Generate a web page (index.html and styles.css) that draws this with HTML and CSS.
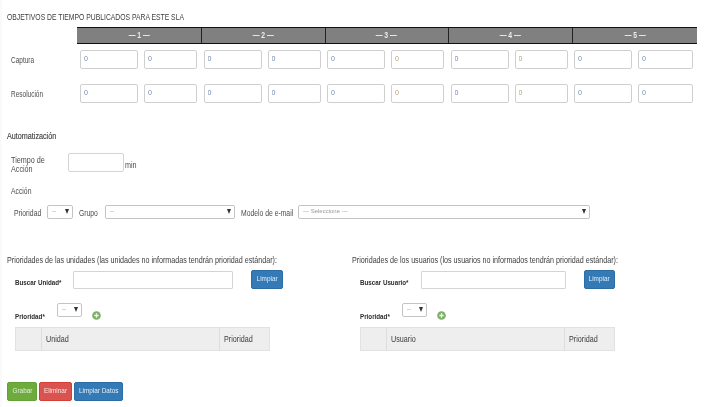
FILE: index.html
```html
<!DOCTYPE html>
<html lang="es">
<head>
<meta charset="utf-8">
<title>SLA</title>
<link rel="stylesheet" href="styles.css">
</head>
<body>
<main class="page">
  <h2 class="title"><span class="sq">OBJETIVOS DE TIEMPO PUBLICADOS PARA ESTE SLA</span></h2>
  <section class="targets">
    <div class="corner"></div>
    <div class="head">
      <div class="head-cell"><span class="sq mid">— 1 —</span></div>
      <div class="head-cell"><span class="sq mid">— 2 —</span></div>
      <div class="head-cell"><span class="sq mid">— 3 —</span></div>
      <div class="head-cell"><span class="sq mid">— 4 —</span></div>
      <div class="head-cell"><span class="sq mid">— 5 —</span></div>
    </div>
    <div class="row-label row-first"><span class="sq">Captura</span></div>
    <div class="cells row-first">
      <div class="pair"><input class="field" value="0"><input class="field" value="0"></div>
      <div class="pair"><input class="field" value="0"><input class="field" value="0"></div>
      <div class="pair"><input class="field" value="0"><input class="field warm" value="0"></div>
      <div class="pair"><input class="field" value="0"><input class="field warm" value="0"></div>
      <div class="pair"><input class="field" value="0"><input class="field" value="0"></div>
    </div>
    <div class="row-label row-second"><span class="sq">Resolución</span></div>
    <div class="cells row-second">
      <div class="pair"><input class="field" value="0"><input class="field" value="0"></div>
      <div class="pair"><input class="field" value="0"><input class="field" value="0"></div>
      <div class="pair"><input class="field" value="0"><input class="field warm" value="0"></div>
      <div class="pair"><input class="field" value="0"><input class="field warm" value="0"></div>
      <div class="pair"><input class="field" value="0"><input class="field" value="0"></div>
    </div>
  </section>

  <h3 class="auto-title"><span class="sq">Automatización</span></h3>
  <div class="time-row">
    <label class="time-label"><span class="sq wrap">Tiempo de Acción</span></label>
    <input class="time-input">
    <span class="time-unit"><span class="sq">min</span></span>
  </div>
  <div class="action-title"><span class="sq">Acción</span></div>
  <div class="action-row">
    <label class="action-label first"><span class="sq">Prioridad</span></label>
    <div class="pick pick-s"><select><option>--</option></select></div>
    <label class="action-label second"><span class="sq">Grupo</span></label>
    <div class="pick pick-m"><select><option>--</option></select></div>
    <label class="action-label third"><span class="sq">Modelo de e-mail</span></label>
    <div class="pick pick-l"><select><option>--- Seleccione ---</option></select></div>
  </div>

  <div class="columns">
    <section class="column">
      <h4 class="col-title"><span class="sq">Prioridades de las unidades (las unidades no informadas tendrán prioridad estándar):</span></h4>
      <div class="search">
        <label class="req search-label"><span class="sq">Buscar Unidad*</span></label>
        <input class="search-input unit-input">
        <button class="btn blue clear-unit"><span class="sq mid">Limpiar</span></button>
      </div>
      <div class="prio">
        <label class="req prio-label"><span class="sq">Prioridad*</span></label>
        <div class="pick pick-s prio-pick"><select><option>--</option></select></div>
        <svg class="plus" viewBox="0 0 10 10"><circle cx="5" cy="5" r="4.8" fill="#7fb069"/><path d="M5 2.6v4.8M2.6 5h4.8" stroke="#eef6e8" stroke-width="1.4"/></svg>
      </div>
      <div class="grid-head">
        <div class="gh gh-a"></div><div class="gh gh-b"><span class="sq">Unidad</span></div><div class="gh gh-c"><span class="sq">Prioridad</span></div>
      </div>
    </section>
    <section class="column column-right">
      <h4 class="col-title"><span class="sq">Prioridades de los usuarios (los usuarios no informados tendrán prioridad estándar):</span></h4>
      <div class="search">
        <label class="req search-label user-label"><span class="sq">Buscar Usuario*</span></label>
        <input class="search-input user-input">
        <button class="btn blue clear-user"><span class="sq mid">Limpiar</span></button>
      </div>
      <div class="prio">
        <label class="req prio-label"><span class="sq">Prioridad*</span></label>
        <div class="pick pick-s prio-pick user-pick"><select><option>--</option></select></div>
        <svg class="plus" viewBox="0 0 10 10"><circle cx="5" cy="5" r="4.8" fill="#7fb069"/><path d="M5 2.6v4.8M2.6 5h4.8" stroke="#eef6e8" stroke-width="1.4"/></svg>
      </div>
      <div class="grid-head">
        <div class="gh gh-a"></div><div class="gh gh-b"><span class="sq">Usuario</span></div><div class="gh gh-c"><span class="sq">Prioridad</span></div>
      </div>
    </section>
  </div>

  <div class="actions">
    <button class="btn green a-save"><span class="sq mid">Grabar</span></button>
    <button class="btn red a-del"><span class="sq mid">Eliminar</span></button>
    <button class="btn blue a-clear"><span class="sq mid">Limpiar Datos</span></button>
  </div>
</main>
</body>
</html>
```

FILE: styles.css
```css
* { box-sizing: border-box; }
html, body { margin: 0; padding: 0; background: #fff; }
body { font-family: "Liberation Sans", Arial, sans-serif; color: #444; font-size: 9px; width: 708px; height: 407px; overflow: hidden; box-shadow: inset 2px 0 #fafafa; }
.page { padding: 12px 0 0 7px; filter: blur(0.45px); }
input, select, button { font-family: inherit; margin: 0; }

/* the reference text is horizontally condensed */
.sq { display: inline-block; white-space: nowrap; transform: scaleX(.8); transform-origin: left center; }
.sq.mid { transform-origin: center; }
.sq.wrap { white-space: normal; width: 45px; }

.title { margin: 0 0 5px; font-size: 8.5px; line-height: 10px; font-weight: 400; color: #3c3c3c; }

.targets { display: grid; grid-template-columns: 70px 620px; grid-template-rows: 17px auto auto; }
.head { display: grid; grid-template-columns: 123.5px 124px 123px 124px 125.5px; background: #808080; border-top: 1px solid #111; border-bottom: 1px solid #111; }
.head-cell { border-left: 1px solid #222; color: #ececec; font-size: 8.5px; font-weight: 700; line-height: 14px; display: flex; justify-content: center; }
.head-cell:first-child { border-left: 0; }
.row-label { padding-left: 4px; font-size: 9px; height: 19px; line-height: 21px; color: #4c4c4c; }
.row-label .sq { transform: scaleX(.72); }
.row-first { margin-top: 6px; }
.row-second { margin-top: 15px; }
.cells { display: grid; grid-template-columns: repeat(5, 123.5px); padding-left: 3px; }
.pair { display: flex; gap: 6px; }
.field { width: 58px; height: 19px; border: 1px solid #cfcfcf; border-radius: 2px; padding: 0 0 3px 3px; font-size: 7px; color: #6f86b0; background: #fff; outline: 0; }
.field + .field { width: 53px; }
.pair:last-child .field + .field { width: 55px; }
.warm { color: #b39f7d; }

.auto-title { margin: 28px 0 0; font-size: 9px; line-height: 11px; font-weight: 400; color: #3c3c3c; -webkit-text-stroke: 0.15px #444; }
.time-row { display: flex; align-items: flex-end; margin-top: 11px; height: 19px; }
.time-label { width: 45px; margin: 0 12px -2px 4px; font-size: 9px; line-height: 9px; color: #4c4c4c; }
.time-input { width: 56px; height: 19px; border: 1px solid #d4d4d4; border-radius: 2px; background: #fff; outline: 0; }
.time-unit { margin-left: 1px; line-height: 13px; color: #4c4c4c; }
.action-title { margin: 15px 0 0 4px; font-size: 8.5px; line-height: 9px; color: #4c4c4c; }
.action-row { display: flex; align-items: center; height: 14px; margin-top: 9px; }
.action-label { font-size: 8.5px; color: #4c4c4c; white-space: nowrap; padding-top: 2px; }
.action-label.first { margin-left: 7px; width: 33px; }
.action-label.second { margin-left: 6px; width: 26px; }
.action-label.third { margin-left: 6px; width: 57px; }

.pick { position: relative; height: 14px; }
.pick select { appearance: none; -webkit-appearance: none; display: block; width: 100%; height: 100%; border: 1px solid #c4c4c4; border-radius: 2px; background: #fff; padding: 0 0 2px 4px; font-size: 6px; color: #999; outline: 0; }
.pick::after { content: ""; position: absolute; right: 4px; top: 4px; width: 0; height: 0; border-left: 2.5px solid transparent; border-right: 2.5px solid transparent; border-top: 5px solid #333; }
.pick-s { width: 26px; }
.pick-m { width: 130px; }
.pick-l { width: 292px; }

.columns { display: flex; margin-top: 36px; }
.column { width: 345px; }
.col-title { margin: 0; font-size: 8.75px; line-height: 10px; font-weight: 400; color: #3c3c3c; white-space: nowrap; }
.col-title .sq { transform: scaleX(.816); }
.search { display: flex; align-items: center; margin-top: 5px; height: 19px; padding-left: 8px; }
.search-label { width: 58px; padding-top: 6px; }
.user-label { width: 61px; }
.req { font-size: 8px; font-weight: 700; color: #2c2c2c; white-space: nowrap; }
.req .sq { transform: scaleX(.78); }
.search-input { height: 18px; margin-top: 1px; border: 1px solid #d4d4d4; border-radius: 1px; background: #fff; outline: 0; }
.unit-input { width: 160px; }
.user-input { width: 145px; }
.clear-unit { margin-left: 18px; width: 32px; }
.clear-user { margin-left: 18px; width: 31px; }
.btn { display: flex; justify-content: center; height: 19px; border: 1px solid transparent; border-radius: 2px; color: #e6eef6; font-size: 8px; line-height: 16px; padding: 0; }
.blue { background: #337ab7; border-color: #2e6da4; }
.green { background: #6eab3d; border-color: #65a035; color: #e4f0da; }
.red { background: #d9534f; border-color: #d43f3a; color: #fbe6e5; }

.prio { display: flex; align-items: flex-start; padding-left: 8px; margin-top: 14px; height: 19px; }
.prio-label { width: 42px; margin-top: 9px; line-height: 9px; }
.prio-pick { width: 25px; }
.plus { width: 9px; height: 9px; margin: 8px 0 0 10px; }

.grid-head { display: grid; grid-template-columns: 25px 178px 50px; width: 255px; height: 24px; margin: 5px 0 0 8px; background: #eee; border: 1px solid #e2e2e2; }
.gh { padding-left: 4px; font-size: 9px; line-height: 22px; color: #3c3c3c; border-left: 1px solid #ddd; }
.gh-a { border-left: 0; }

.actions { display: flex; gap: 2px; margin-top: 31px; }
.a-save { width: 30px; }
.a-del { width: 33px; }
.a-clear { width: 49px; }
```
